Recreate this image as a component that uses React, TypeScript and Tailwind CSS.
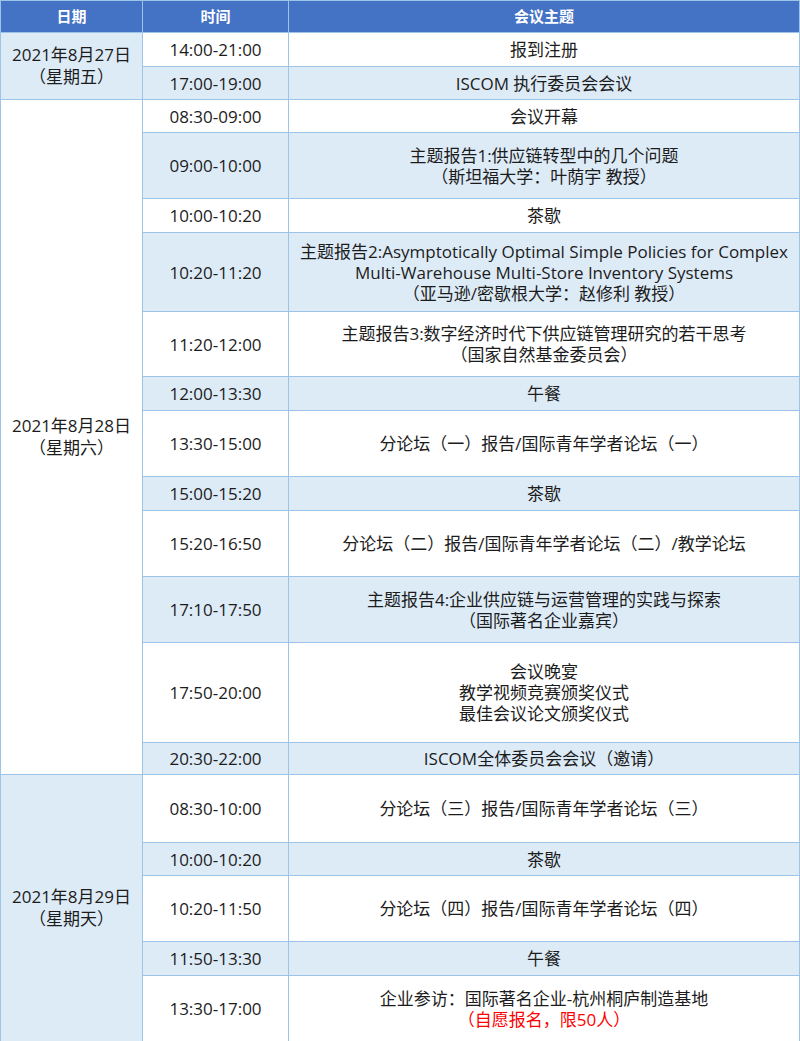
type Row = {
  time: string;
  lines: string[];
  red?: string;
  h: number;
};

type Day = {
  date: string;
  week: string;
  shaded: boolean;
  rows: Row[];
};

const days: Day[] = [
  {
    date: "2021年8月27日",
    week: "（星期五）",
    shaded: true,
    rows: [
      { time: "14:00-21:00", lines: ["报到注册"], h: 34 },
      { time: "17:00-19:00", lines: ["ISCOM 执行委员会会议"], h: 33 },
    ],
  },
  {
    date: "2021年8月28日",
    week: "（星期六）",
    shaded: false,
    rows: [
      { time: "08:30-09:00", lines: ["会议开幕"], h: 33 },
      { time: "09:00-10:00", lines: ["主题报告1:供应链转型中的几个问题", "（斯坦福大学：叶荫宇 教授）"], h: 66 },
      { time: "10:00-10:20", lines: ["茶歇"], h: 34 },
      {
        time: "10:20-11:20",
        lines: [
          "主题报告2:Asymptotically Optimal Simple Policies for Complex",
          "Multi-Warehouse Multi-Store Inventory Systems",
          "（亚马逊/密歇根大学：赵修利 教授）",
        ],
        h: 79,
      },
      { time: "11:20-12:00", lines: ["主题报告3:数字经济时代下供应链管理研究的若干思考", "（国家自然基金委员会）"], h: 65 },
      { time: "12:00-13:30", lines: ["午餐"], h: 34 },
      { time: "13:30-15:00", lines: ["分论坛（一）报告/国际青年学者论坛（一）"], h: 66 },
      { time: "15:00-15:20", lines: ["茶歇"], h: 34 },
      { time: "15:20-16:50", lines: ["分论坛（二）报告/国际青年学者论坛（二）/教学论坛"], h: 66 },
      { time: "17:10-17:50", lines: ["主题报告4:企业供应链与运营管理的实践与探索", "（国际著名企业嘉宾）"], h: 66 },
      { time: "17:50-20:00", lines: ["会议晚宴", "教学视频竞赛颁奖仪式", "最佳会议论文颁奖仪式"], h: 100 },
      { time: "20:30-22:00", lines: ["ISCOM全体委员会会议（邀请）"], h: 32 },
    ],
  },
  {
    date: "2021年8月29日",
    week: "（星期天）",
    shaded: true,
    rows: [
      { time: "08:30-10:00", lines: ["分论坛（三）报告/国际青年学者论坛（三）"], h: 68 },
      { time: "10:00-10:20", lines: ["茶歇"], h: 33 },
      { time: "10:20-11:50", lines: ["分论坛（四）报告/国际青年学者论坛（四）"], h: 66 },
      { time: "11:50-13:30", lines: ["午餐"], h: 34 },
      {
        time: "13:30-17:00",
        lines: ["企业参访：国际著名企业-杭州桐庐制造基地"],
        red: "（自愿报名，限50人）",
        h: 66,
      },
    ],
  },
];

export default function App() {
  let n = 0;
  return (
    <div className="w-[800px] bg-white font-['Open_Sans','Noto_Sans_CJK_SC',sans-serif] text-[17px] leading-[21px] text-[#1c1c1c]">
      <table className="w-[800px] table-fixed border-collapse">
        <colgroup>
          <col className="w-[142px]" />
          <col className="w-[146px]" />
          <col />
        </colgroup>
        <thead>
          <tr className="h-[32px] bg-[#4472c4] text-[15px] font-bold text-white">
            <th className="border border-[#9dc3e6]">日期</th>
            <th className="border border-[#9dc3e6]">时间</th>
            <th className="border border-[#9dc3e6]">会议主题</th>
          </tr>
        </thead>
        <tbody>
          {days.map((day) =>
            day.rows.map((row, i) => {
              const shaded = n++ % 2 === 1;
              return (
                <tr key={day.date + row.time} style={{ height: row.h }}>
                  {i === 0 && (
                    <td
                      rowSpan={day.rows.length}
                      className={
                        "border border-[#9dc3e6] text-center align-middle leading-[22px] " +
                        (day.shaded ? "bg-[#ddebf7]" : "bg-white")
                      }
                    >
                      <div>{day.date}</div>
                      <div>{day.week}</div>
                    </td>
                  )}
                  <td
                    className={
                      "border border-[#9dc3e6] text-center align-middle " +
                      (shaded ? "bg-[#ddebf7]" : "bg-white")
                    }
                  >
                    {row.time}
                  </td>
                  <td
                    className={
                      "border border-[#9dc3e6] text-center align-middle whitespace-nowrap " +
                      (shaded ? "bg-[#ddebf7]" : "bg-white")
                    }
                  >
                    {row.lines.map((l) => (
                      <div key={l}>{l}</div>
                    ))}
                    {row.red && <div className="text-[#ff0000]">{row.red}</div>}
                  </td>
                </tr>
              );
            })
          )}
        </tbody>
      </table>
    </div>
  );
}
